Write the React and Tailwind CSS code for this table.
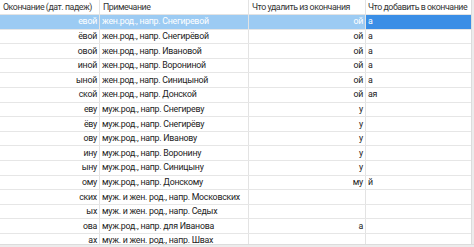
import React from 'react';

const rows = [
  ['евой', 'жен.род., напр. Снегиревой', 'ой', 'а'],
  ['ёвой', 'жен.род., напр. Снегирёвой', 'ой', 'а'],
  ['овой', 'жен.род., напр. Ивановой', 'ой', 'а'],
  ['иной', 'жен.род., напр. Ворониной', 'ой', 'а'],
  ['ыной', 'жен.род., напр. Синицыной', 'ой', 'а'],
  ['ской', 'жен.род., напр. Донской', 'ой', 'ая'],
  ['еву', 'муж.род., напр. Снегиреву', 'у', ''],
  ['ёву', 'муж.род., напр. Снегирёву', 'у', ''],
  ['ову', 'муж.род., напр. Иванову', 'у', ''],
  ['ину', 'муж.род., напр. Воронину', 'у', ''],
  ['ыну', 'муж.род., напр. Синицыну', 'у', ''],
  ['ому', 'муж.род., напр. Донскому', 'му', 'й'],
  ['ских', 'муж. и жен. род., напр. Московских', '', ''],
  ['ых', 'муж. и жен. род., напр. Седых', '', ''],
  ['ова', 'муж.род., напр. для Иванова', 'а', ''],
  ['ах', 'муж. и жен. род., напр. Швах', '', ''],
];

const cols = 'grid grid-cols-[100px_149px_117px_1fr]';

export default function App() {
  return (
    <div className="relative w-[474px] h-[247px] overflow-hidden bg-white text-[8.8px] tracking-[-0.25px] text-[#222] leading-none" style={{ fontFamily: 'Roboto, sans-serif' }}>
      {/* Header */}
      <div className={`${cols} h-[15px] border-b border-[#e3e3e3] text-[#333] tracking-[-0.45px]`}>
        <div className="px-[3px] flex items-center border-r border-[#e3e3e3] whitespace-nowrap overflow-hidden">Окончание (дат. падеж)</div>
        <div className="px-[3px] flex items-center border-r border-[#e3e3e3] whitespace-nowrap overflow-hidden">Примечание</div>
        <div className="px-[3px] flex items-center border-r border-[#e3e3e3] whitespace-nowrap overflow-hidden">Что удалить из окончания</div>
        <div className="px-[2px] flex items-center whitespace-nowrap overflow-hidden">Что добавить в окончание</div>
      </div>

      {/* Rows */}
      {rows.map((r, i) => {
        const sel = i === 0;
        return (
          <div key={i} className={`${cols} h-[14.6px] border-b border-[#e6e6e6] ${sel ? 'text-white' : ''}`}>
            <div className={`px-[2px] flex items-center justify-end border-r border-[#e3e3e3] whitespace-nowrap overflow-hidden ${sel ? 'bg-[#9ccbf3]' : ''}`}>{r[0]}</div>
            <div className={`px-[2px] flex items-center border-r border-[#e3e3e3] whitespace-nowrap overflow-hidden ${sel ? 'bg-[#9ccbf3]' : ''}`}>{r[1]}</div>
            <div className={`px-[2px] flex items-center justify-end border-r border-[#e3e3e3] whitespace-nowrap overflow-hidden ${sel ? 'bg-[#9ccbf3]' : ''}`}>{r[2]}</div>
            <div className={`px-[2px] flex items-center whitespace-nowrap overflow-hidden ${sel ? 'bg-[#3a8ee6]' : ''}`}>{r[3]}</div>
          </div>
        );
      })}

      {/* scrollbar edges */}
      <div className="absolute right-0 top-0 bottom-0 w-[3px] bg-[#ececec] border-l border-[#dcdcdc]" />
      <div className="absolute left-0 right-0 bottom-0 h-[3px] bg-[#ececec] border-t border-[#dcdcdc]" />
    </div>
  );
}
